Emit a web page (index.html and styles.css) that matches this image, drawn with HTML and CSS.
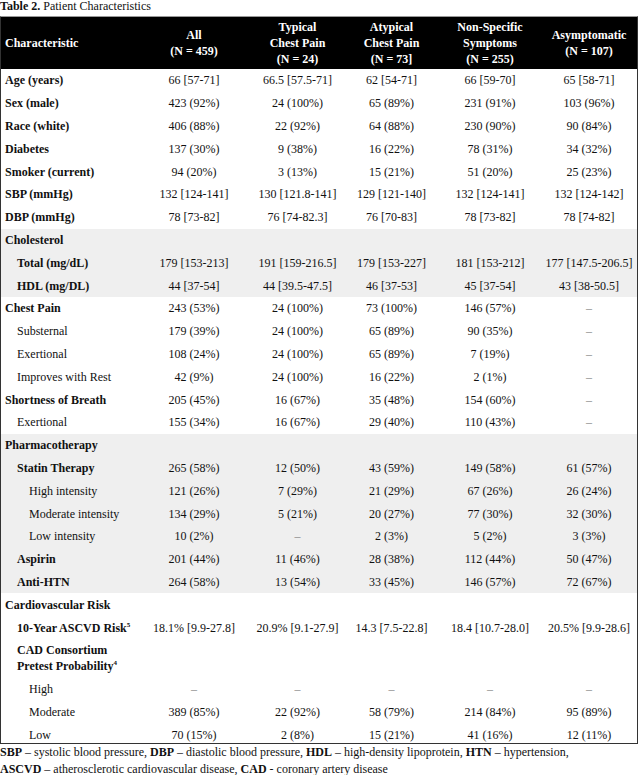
FILE: index.html
```html
<!DOCTYPE html>
<html>
<head>
<meta charset="utf-8">
<link rel="stylesheet" href="styles.css">
</head>
<body>
<div class="title"><b>Table 2.</b> Patient Characteristics</div>
<div class="frame">
<table class="tbl">
<colgroup>
<col class="c0"><col class="c1"><col class="c2"><col class="c3"><col class="c4"><col class="c5">
</colgroup>
<thead>
<tr>
<th class="lab">Characteristic</th>
<th>All<br>(N = 459)</th>
<th>Typical<br>Chest Pain<br>(N = 24)</th>
<th>Atypical<br>Chest Pain<br>(N = 73]</th>
<th>Non-Specific<br>Symptoms<br>(N = 255)</th>
<th>Asymptomatic<br>(N = 107)</th>
</tr>
</thead>
<tbody>
<tr><td class="lab b">Age (years)</td><td>66 [57-71]</td><td>66.5 [57.5-71]</td><td>62 [54-71]</td><td>66 [59-70]</td><td>65 [58-71]</td></tr>
<tr><td class="lab b">Sex (male)</td><td>423 (92%)</td><td>24 (100%)</td><td>65 (89%)</td><td>231 (91%)</td><td>103 (96%)</td></tr>
<tr><td class="lab b">Race (white)</td><td>406 (88%)</td><td>22 (92%)</td><td>64 (88%)</td><td>230 (90%)</td><td>90 (84%)</td></tr>
<tr><td class="lab b">Diabetes</td><td>137 (30%)</td><td>9 (38%)</td><td>16 (22%)</td><td>78 (31%)</td><td>34 (32%)</td></tr>
<tr><td class="lab b">Smoker (current)</td><td>94 (20%)</td><td>3 (13%)</td><td>15 (21%)</td><td>51 (20%)</td><td>25 (23%)</td></tr>
<tr><td class="lab b">SBP (mmHg)</td><td>132 [124-141]</td><td>130 [121.8-141]</td><td>129 [121-140]</td><td>132 [124-141]</td><td>132 [124-142]</td></tr>
<tr><td class="lab b">DBP (mmHg)</td><td>78 [73-82]</td><td>76 [74-82.3]</td><td>76 [70-83]</td><td>78 [73-82]</td><td>78 [74-82]</td></tr>
<tr class="shade"><td class="lab b">Cholesterol</td><td></td><td></td><td></td><td></td><td></td></tr>
<tr class="shade"><td class="lab l1 b">Total (mg/dL)</td><td>179 [153-213]</td><td>191 [159-216.5]</td><td>179 [153-227]</td><td>181 [153-212]</td><td>177 [147.5-206.5]</td></tr>
<tr class="shade"><td class="lab l1 b">HDL (mg/DL)</td><td>44 [37-54]</td><td>44 [39.5-47.5]</td><td>46 [37-53]</td><td>45 [37-54]</td><td>43 [38-50.5]</td></tr>
<tr><td class="lab b">Chest Pain</td><td>243 (53%)</td><td>24 (100%)</td><td>73 (100%)</td><td>146 (57%)</td><td class="dash">–</td></tr>
<tr><td class="lab l1">Substernal</td><td>179 (39%)</td><td>24 (100%)</td><td>65 (89%)</td><td>90 (35%)</td><td class="dash">–</td></tr>
<tr><td class="lab l1">Exertional</td><td>108 (24%)</td><td>24 (100%)</td><td>65 (89%)</td><td>7 (19%)</td><td class="dash">–</td></tr>
<tr><td class="lab l1">Improves with Rest</td><td>42 (9%)</td><td>24 (100%)</td><td>16 (22%)</td><td>2 (1%)</td><td class="dash">–</td></tr>
<tr><td class="lab b">Shortness of Breath</td><td>205 (45%)</td><td>16 (67%)</td><td>35 (48%)</td><td>154 (60%)</td><td class="dash">–</td></tr>
<tr><td class="lab l1">Exertional</td><td>155 (34%)</td><td>16 (67%)</td><td>29 (40%)</td><td>110 (43%)</td><td class="dash">–</td></tr>
<tr class="shade"><td class="lab b">Pharmacotherapy</td><td></td><td></td><td></td><td></td><td></td></tr>
<tr class="shade"><td class="lab l1 b">Statin Therapy</td><td>265 (58%)</td><td>12 (50%)</td><td>43 (59%)</td><td>149 (58%)</td><td>61 (57%)</td></tr>
<tr class="shade"><td class="lab l2">High intensity</td><td>121 (26%)</td><td>7 (29%)</td><td>21 (29%)</td><td>67 (26%)</td><td>26 (24%)</td></tr>
<tr class="shade"><td class="lab l2">Moderate intensity</td><td>134 (29%)</td><td>5 (21%)</td><td>20 (27%)</td><td>77 (30%)</td><td>32 (30%)</td></tr>
<tr class="shade"><td class="lab l2">Low intensity</td><td>10 (2%)</td><td class="dash">–</td><td>2 (3%)</td><td>5 (2%)</td><td>3 (3%)</td></tr>
<tr class="shade"><td class="lab l1 b">Aspirin</td><td>201 (44%)</td><td>11 (46%)</td><td>28 (38%)</td><td>112 (44%)</td><td>50 (47%)</td></tr>
<tr class="shade"><td class="lab l1 b">Anti-HTN</td><td>264 (58%)</td><td>13 (54%)</td><td>33 (45%)</td><td>146 (57%)</td><td>72 (67%)</td></tr>
<tr><td class="lab b">Cardiovascular Risk</td><td></td><td></td><td></td><td></td><td></td></tr>
<tr><td class="lab l1 b">10-Year ASCVD Risk<sup>5</sup></td><td>18.1% [9.9-27.8]</td><td>20.9% [9.1-27.9]</td><td>14.3 [7.5-22.8]</td><td>18.4 [10.7-28.0]</td><td>20.5% [9.9-28.6]</td></tr>
<tr class="tall"><td class="lab l1 b">CAD Consortium<br>Pretest Probability<sup>4</sup></td><td></td><td></td><td></td><td></td><td></td></tr>
<tr><td class="lab l2">High</td><td class="dash">–</td><td class="dash">–</td><td class="dash">–</td><td class="dash">–</td><td class="dash">–</td></tr>
<tr><td class="lab l2">Moderate</td><td>389 (85%)</td><td>22 (92%)</td><td>58 (79%)</td><td>214 (84%)</td><td>95 (89%)</td></tr>
<tr class="last"><td class="lab l2">Low</td><td>70 (15%)</td><td>2 (8%)</td><td>15 (21%)</td><td>41 (16%)</td><td>12 (11%)</td></tr>
</tbody>
</table>
</div>
<div class="notes"><b>SBP</b> – systolic blood pressure, <b>DBP</b> – diastolic blood pressure, <b>HDL</b> – high-density lipoprotein, <b>HTN</b> – hypertension,<br><b>ASCVD</b> – atherosclerotic cardiovascular disease, <b>CAD</b> - coronary artery disease</div>
</body>
</html>
```
FILE: styles.css
```css
html, body {
  margin: 0;
  padding: 0;
  background: #ffffff;
}
body {
  font-family: "Liberation Serif", "Times New Roman", serif;
  font-size: 12px;
  color: #111;
  width: 640px;
}
.title {
  line-height: 12px;
  height: 12px;
  margin: 0 0 4px 0;
}
.frame {
  width: 636px;
  border: 1px solid #333;
  border-top-color: #999;
}
.tbl {
  width: 636px;
  table-layout: fixed;
  border-collapse: collapse;
  border-spacing: 0;
}
.c0 { width: 136px; }
.c1 { width: 114px; }
.c2 { width: 93px; }
.c3 { width: 95px; }
.c4 { width: 102px; }
.c5 { width: 96px; }
.tbl th {
  background: #000;
  color: #fff;
  font-weight: bold;
  height: 52px;
  padding: 0;
  line-height: 16px;
  text-align: center;
  vertical-align: middle;
}
.tbl th.lab {
  text-align: left;
  padding-left: 4px;
}
.tbl td {
  height: 22.8px;
  padding: 0;
  line-height: 16px;
  text-align: center;
  vertical-align: middle;
  white-space: nowrap;
}
.tbl td.lab {
  text-align: left;
  padding-left: 4px;
}
.tbl td.l1 { padding-left: 16px; }
.tbl td.l2 { padding-left: 28px; }
.tbl td.b { font-weight: bold; }
.tbl tr.tall td { height: 38.8px; }
.tbl tr.last td {
  height: 19.4px;
  vertical-align: top;
  padding-top: 3.4px;
  box-sizing: border-box;
}
.tbl tr.shade td { background: #efefef; }
.tbl td.dash { color: #888; }
sup {
  font-size: 7px;
  line-height: 0;
  vertical-align: 5px;
}
.notes {
  line-height: 17px;
}
```
